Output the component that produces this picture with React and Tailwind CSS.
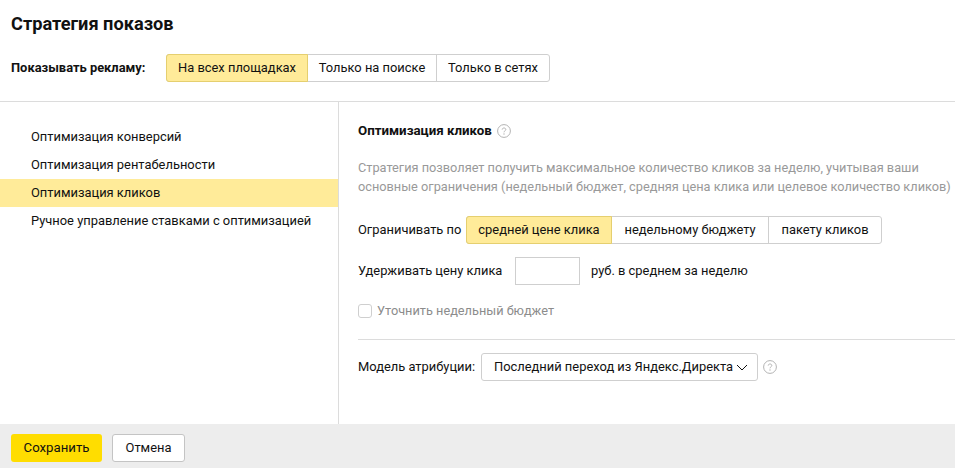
const Seg = ({ items, w }) => (
  <div className="flex h-7 shrink-0 rounded-[3px] border border-[#cfcfcf] bg-white">
    {items.map((t, i) => (
      <div
        key={t}
        style={{ width: w[i] }}
        className={
          "flex items-center justify-center whitespace-nowrap " +
          (i === 0 ? "-m-px mr-0 rounded-l-[3px] border border-[#e5cf6f] bg-[#ffeb99] " : "") +
          (i === 2 ? "border-l border-[#cfcfcf] " : "")
        }
      >
        {t}
      </div>
    ))}
  </div>
);

const Help = () => (
  <svg width="14" height="14" viewBox="0 0 14 14" fill="none" className="shrink-0">
    <circle cx="7" cy="7" r="6.4" stroke="#b3b3b3" />
    <path d="M5.2 5.6C5.2 4.6 6 4 7 4s1.8.6 1.8 1.5c0 1.3-1.8 1.4-1.8 2.8" stroke="#b3b3b3" strokeWidth="1" />
    <circle cx="7" cy="10" r=".7" fill="#b3b3b3" />
  </svg>
);

export default function App() {
  return (
    <div className="flex h-[468px] w-[955px] flex-col overflow-hidden bg-white font-['Roboto',sans-serif] text-[12.9px] text-[#111]">
      <div className="h-[102px] shrink-0 border-b border-[#dcdcdc] pl-[11px]">
        <h1 className="pt-[11px] text-[18.2px] leading-[26px] font-bold">Стратегия показов</h1>
        <div className="mt-[17px] flex items-center">
          <div className="w-[155px] shrink-0 whitespace-nowrap font-bold">Показывать рекламу:</div>
          <Seg items={["На всех площадках", "Только на поиске", "Только в сетях"]} w={[142, 128, 113]} />
        </div>
      </div>
      <div className="flex min-h-0 flex-1">
        <div className="w-[339px] shrink-0 border-r border-[#dcdcdc] pt-[21px]">
          {["Оптимизация конверсий", "Оптимизация рентабельности", "Оптимизация кликов", "Ручное управление ставками с оптимизацией"].map((t, i) => (
            <div key={t} className={"flex h-7 items-center whitespace-nowrap pl-[31px] " + (i === 2 ? "bg-[#ffeb99]" : "")}>{t}</div>
          ))}
        </div>
        <div className="min-w-0 flex-1 pt-[19px] pl-[19px]">
          <div className="flex h-5 items-center gap-[5px] text-[13.3px] font-bold">Оптимизация кликов <Help /></div>
          <p className="mt-[17px] text-[12.75px] leading-[19px] whitespace-nowrap text-[#999]">
            Стратегия позволяет получить максимальное количество кликов за неделю, учитывая ваши<br />
            основные ограничения (недельный бюджет, средняя цена клика или целевое количество кликов)
          </p>
          <div className="mt-[20px] flex items-center">
            <div className="w-[108px] shrink-0 whitespace-nowrap">Ограничивать по</div>
            <Seg items={["средней цене клика", "недельному бюджету", "пакету кликов"]} w={[146, 156, 113]} />
          </div>
          <div className="mt-[13px] flex h-7 items-center">
            <div className="w-[157px] shrink-0 whitespace-nowrap">Удерживать цену клика</div>
            <div className="h-7 w-[65px] shrink-0 border border-[#cfcfcf]" />
            <div className="ml-[11px] whitespace-nowrap">руб. в среднем за неделю</div>
          </div>
          <label className="mt-[16px] flex h-[20px] items-center gap-[5px] text-[12.75px] text-[#8c8c8c]">
            <span className="h-[14px] w-[14px] rounded-[3px] border border-[#cfcfcf]" />
            Уточнить недельный бюджет
          </label>
          <div className="mt-[18px] h-px bg-[#dcdcdc]" />
          <div className="mt-[13px] flex items-center">
            <div className="w-[123px] shrink-0 whitespace-nowrap">Модель атрибуции:</div>
            <div className="flex h-7 w-[277px] shrink-0 items-center justify-between rounded-[3px] border border-[#cfcfcf] pr-[9px] pl-[12px] whitespace-nowrap">
              Последний переход из Яндекс.Директа
              <svg width="12" height="7" viewBox="0 0 12 7" fill="none" className="shrink-0"><path d="M1 1l5 5 5-5" stroke="#111" strokeWidth="1" /></svg>
            </div>
            <div className="ml-[5px]"><Help /></div>
          </div>
        </div>
      </div>
      <div className="flex h-11 shrink-0 items-start gap-[10px] bg-[#ededed] pt-[10px] pl-[11px]">
        <button className="h-7 w-[91px] rounded-[3px] bg-[#ffdd00] text-[13.2px]">Сохранить</button>
        <button className="h-7 w-[73px] rounded-[3px] border border-[#c4c4c4] bg-white">Отмена</button>
      </div>
    </div>
  );
}
